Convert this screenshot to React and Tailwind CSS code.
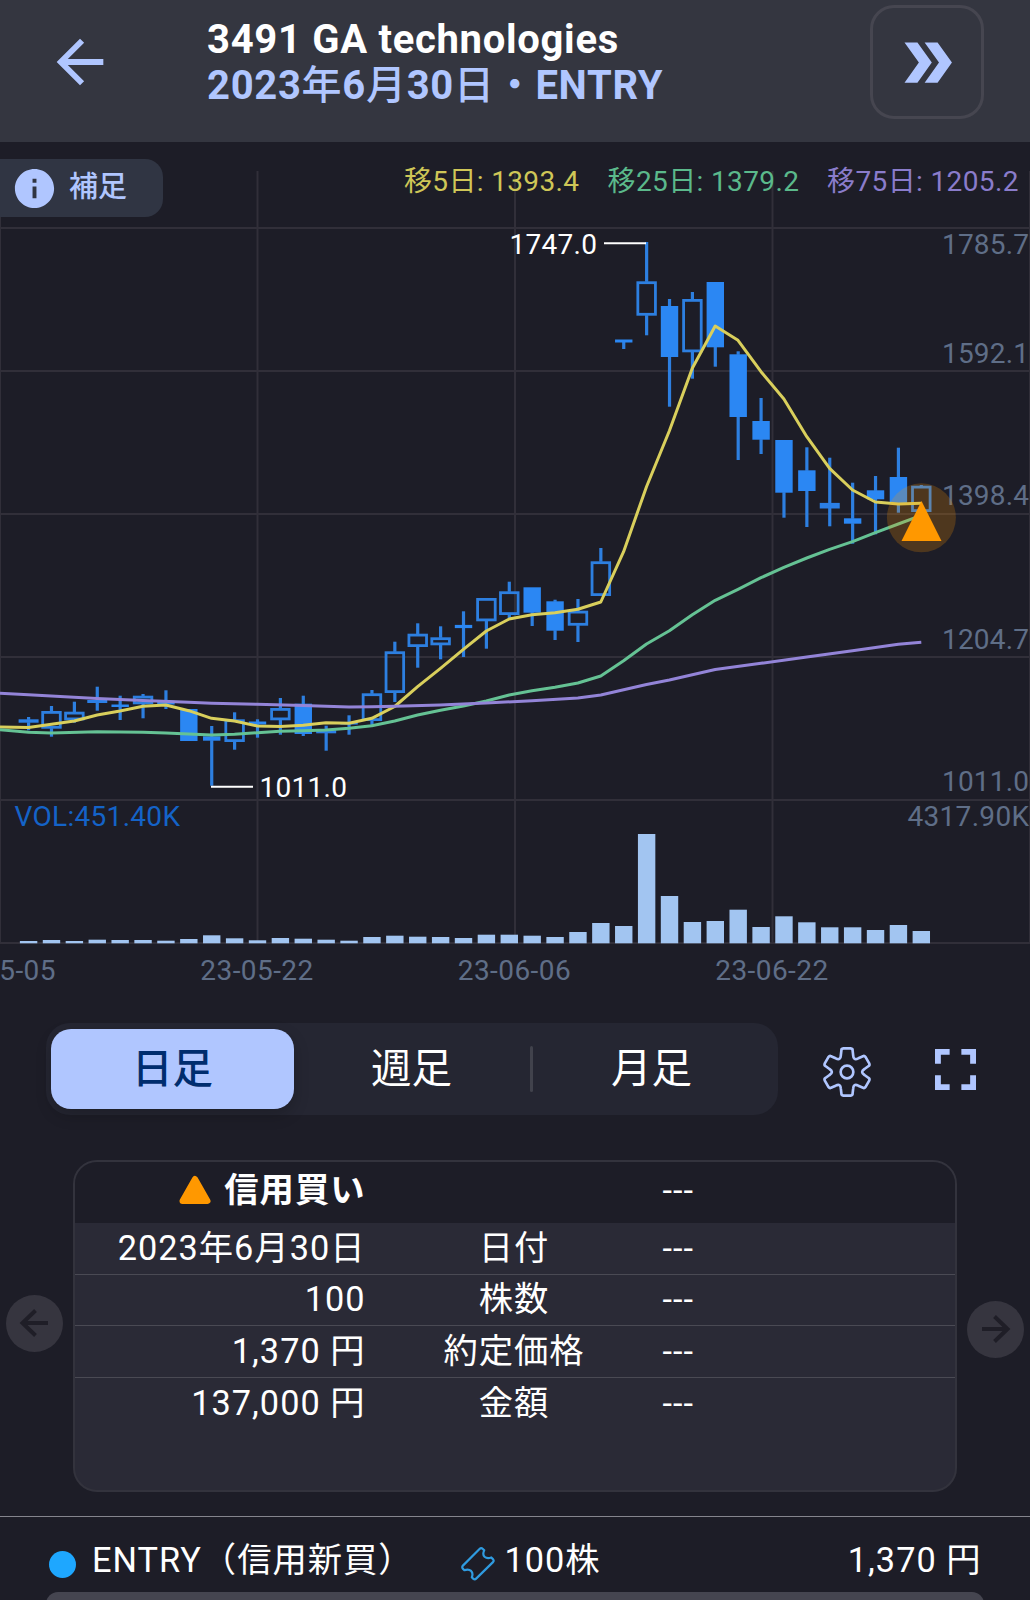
import React from "react";
import { MdArrowBack, MdDoubleArrow, MdInfo } from "react-icons/md";

const X0 = 28.6;
const STEP = 22.89;
const BASE = 943.3;

// type (f: filled, h: hollow), high, body top, body bottom, low
const candles = [
  ["h", 717, 719.3, 722.7, 730.3],
  ["h", 706, 711, 728.7, 736.7],
  ["h", 701.7, 711.7, 720.3, 722.7],
  ["h", 686.7, 700, 703, 710.7],
  ["f", 695.7, 704.5, 707, 720],
  ["h", 694, 695.7, 704.3, 718.3],
  ["f", 690.3, 700.7, 704.5, 709],
  ["f", 709, 709, 741, 741],
  ["f", 726, 736.3, 740.7, 785.7],
  ["h", 712.3, 719.3, 742, 749.7],
  ["f", 719.3, 721.5, 724.5, 737.7],
  ["h", 698, 708, 720.3, 734.7],
  ["f", 695.7, 703.7, 734, 736],
  ["h", 725.7, 730.3, 733.3, 750.7],
  ["f", 715.3, 722.5, 724.5, 734.7],
  ["h", 690, 693.3, 721, 725],
  ["h", 641.7, 651.3, 693, 702],
  ["h", 623.3, 633.7, 647, 667.7],
  ["h", 626.3, 637.3, 645.3, 659.3],
  ["f", 611.3, 624.9, 628.1, 657],
  ["h", 598, 598, 621.3, 648.7],
  ["h", 581.7, 591.3, 615, 618],
  ["f", 587.3, 587.3, 612.7, 626],
  ["f", 599.7, 601.3, 630.7, 640],
  ["h", 599, 610.7, 625.7, 642],
  ["h", 548, 561.3, 596, 596],
  ["f", 339.5, 339.5, 342.5, 349],
  ["h", 242, 281.3, 315.7, 335.3],
  ["f", 299, 306, 357, 406.7],
  ["h", 292, 299, 352.3, 378.7],
  ["f", 282, 282, 347.3, 366.7],
  ["f", 351.3, 354.3, 417, 460],
  ["f", 398, 421, 439.7, 454],
  ["f", 440, 440, 492.7, 517.7],
  ["f", 447.3, 470.3, 491, 527],
  ["h", 457.7, 502.9, 508.5, 526.3],
  ["f", 482.7, 518.3, 523.7, 543.7],
  ["f", 476, 490.3, 499.3, 534.3],
  ["f", 447.7, 477, 503, 512.7],
  ["h", 485, 485.7, 512, 512],
];

const volumeTops = [
  941, 940, 941, 939.7, 940, 940, 940.7, 939, 935.3, 938.3, 940.3, 938, 938.7,
  939.7, 940.7, 937, 935.7, 936.7, 937, 938, 934.7, 934.7, 935.7, 937, 932, 923,
  926, 834, 896, 922, 921, 909.7, 927, 916.3, 922.3, 927.3, 927.3, 930, 925, 931,
];

const ma5 =
  "0,727 28.5,727.5 51.4,724.3 74.3,721 97.2,715 120,711 143,706.3 165.8,705 188.7,710.7 211.6,718.3 234.5,721 257.4,726 280.3,726.5 303.2,725.3 326,722.7 349,723.3 371.8,718.3 394.7,706.5 417.6,686.7 440.5,668.3 463.4,649.3 486.3,631 509.2,619 532,614.7 555,612.7 577.9,609.3 600.8,602 623.6,551.7 646.5,486.7 669.4,430.7 692.3,368.3 715.2,326 738,340.3 761,371.7 783.9,399 806.8,436.7 829.6,468.3 852.5,490 875.4,502 898.3,504 921.3,503.3";
const ma25 =
  "0,729.7 28.5,732.3 51.4,733 97,731.7 143,732.3 166,733 188.7,734 211.6,735 234.5,734.3 257.4,732.7 280,731.3 303,730.7 326,730 349,728.3 371.8,725.7 394.7,721 417.6,715 440.5,710.3 463.4,706 486.3,701 509.2,695 532,690.7 555,687.3 577.9,683 600.8,676 623.6,660.7 646.5,644 669.4,630.7 692.3,614.7 715.2,600.3 738,589.3 761,577.7 783.9,567.3 806.8,558 829.6,549.3 852.5,541.7 875.4,532.7 898.3,524 921.3,515.3";
const ma75 =
  "0,693.2 28.5,694.8 74,697.2 97,698.6 143,700.6 188.7,702.3 211.6,703.2 257,704.2 303,705.5 349,706.9 371.8,706.8 394.7,706.3 440,705 486,703 532,700.7 577.9,698 600.8,695 646.5,684.5 669.4,680 715.2,669.5 761,663.3 806.8,657 852.5,650.7 898.3,644.2 921.3,642.3";

const priceLabels = [
  ["1785.7", 253.7, 86],
  ["1592.1", 362.7, 86],
  ["1398.4", 505.3, 86],
  ["1204.7", 648.7, 86],
  ["1011.0", 791.3, 86],
  ["4317.90K", 825.7, 120.5],
];

function Candle({ i, c }) {
  const [type, high, top, bottom, low] = c;
  const x = X0 + STEP * i;
  return (
    <g>
      {top - high > 0.5 && (
        <line x1={x} x2={x} y1={high} y2={top + 0.5} stroke="#2d7fe0" strokeWidth="3.2" />
      )}
      {low - bottom > 0.5 && (
        <line x1={x} x2={x} y1={bottom - 0.5} y2={low} stroke="#2d7fe0" strokeWidth="3.2" />
      )}
      {type === "f" ? (
        <rect x={x - 8.7} y={top} width="17.4" height={bottom - top} fill="#2b87f3" />
      ) : bottom - top < 6 ? (
        <rect x={x - 10} y={top} width="20" height={bottom - top} fill="#2b7fe6" />
      ) : (
        <rect
          x={x - 8.8}
          y={top + 1.4}
          width="17.6"
          height={bottom - top - 2.8}
          fill="none"
          stroke="#2d7fe0"
          strokeWidth="2.8"
        />
      )}
    </g>
  );
}

function Chart() {
  return (
    <svg
      className="block h-[881px] w-[1030px] shrink-0 font-[Roboto,'Noto_Sans_CJK_JP',sans-serif] text-[28px]"
      viewBox="0 142 1030 881"
    >
      <g stroke="#312f39" strokeWidth="2">
        {[228, 371, 514, 657, 800, 943].map((y) => (
          <line key={y} x1="0" x2="1030" y1={y} y2={y} />
        ))}
        {[0, 257.5, 515, 772.5, 1030].map((x) => (
          <line key={x} x1={x} x2={x} y1="171" y2="943" />
        ))}
      </g>
      {candles.map((c, i) => (
        <Candle key={i} i={i} c={c} />
      ))}
      {volumeTops.map((y, i) => (
        <rect key={i} x={X0 + STEP * i - 8.7} y={y} width="17.4" height={BASE - y} fill="#a2c5f1" />
      ))}
      <g fill="none" strokeWidth="3" strokeLinejoin="round">
        <polyline points={ma5} stroke="#d9cf5c" />
        <polyline points={ma25} stroke="#65c294" />
        <polyline points={ma75} stroke="#9384d8" />
      </g>
      <g stroke="#fff" strokeWidth="2">
        <line x1="604" x2="646" y1="243.2" y2="243.2" />
        <line x1="211" x2="253" y1="786.7" y2="786.7" />
      </g>
      <g fill="#fff">
        <text x="509.5" y="253.7" textLength="87.5">1747.0</text>
        <text x="259.5" y="797" textLength="87.5">1011.0</text>
      </g>
      <text x="404" y="190.8" textLength="175" fill="#cfc657">移5日: 1393.4</text>
      <text x="607.5" y="190.8" textLength="191.5" fill="#5bb98b">移25日: 1379.2</text>
      <text x="827" y="190.8" textLength="191.5" fill="#8a7ccb">移75日: 1205.2</text>
      <g fill="#5f6e87">
        {priceLabels.map(([t, y, w]) => (
          <text key={t} x={1028 - w} y={y} textLength={w + 1}>{t}</text>
        ))}
        {[
          ["23-05-05", -1],
          ["23-05-22", 256.8],
          ["23-06-06", 514.2],
          ["23-06-22", 771.7],
        ].map(([t, x]) => (
          <text key={t} x={x - 56.5} y="980.3" textLength="113">{t}</text>
        ))}
      </g>
      <text x="14.5" y="825.5" textLength="165.5" fill="#1463c8">VOL:451.40K</text>
      <circle cx="921.4" cy="517.8" r="34.5" fill="#ff9800" fillOpacity="0.22" />
      <path d="M921.5 501 L941.5 541 H901.5 Z" fill="#ff9800" />
    </svg>
  );
}

function gearPath() {
  const rot = (x, y, k) => {
    const a = (k * Math.PI) / 3;
    return `${(x * Math.cos(a) - y * Math.sin(a)).toFixed(1)} ${(x * Math.sin(a) + y * Math.cos(a)).toFixed(1)}`;
  };
  let d = "";
  for (let k = 0; k < 6; k++) {
    d += `${k ? "L" : "M"}${rot(66.6, -26, k)} Q${rot(69, -20, k)} ${rot(64.8, -18, k)}`;
    d += ` L${rot(52.5, -9, k)} C${rot(43, -3, k)} ${rot(43, 3, k)} ${rot(52.5, 9, k)}`;
    d += ` L${rot(64.8, 18, k)} Q${rot(69, 20, k)} ${rot(66.6, 26, k)}`;
  }
  return d + "Z";
}

function Gear() {
  return (
    <svg className="h-[50px] w-[50px]" viewBox="-75 -75 150 150" fill="none" stroke="#b0c6ff" strokeWidth="8" strokeLinejoin="round">
      <path d={gearPath()} />
      <circle r="19" />
    </svg>
  );
}

function Ticket() {
  return (
    <svg className="h-[34px] w-[34px]" viewBox="0 0 101 101" fill="none" stroke="#2f9be0" strokeWidth="6.5" strokeLinejoin="round">
      <path d="M5 56 L55 6 Q60 1 65 6 L69 10 Q63 22 70 29 Q78 36 90 31 L95 36 Q99 41 95 45 L45 94 Q41 98 36 94 L32 90 Q37 78 30 71 Q22 64 10 69 L6 65 Q2 61 5 56Z" />
    </svg>
  );
}

function CircleArrow({ flip }) {
  return (
    <div className="flex h-[57px] w-[57px] items-center justify-center rounded-full bg-[#36353f]">
      <svg
        className={flip ? "h-[30px] w-[30px] rotate-180" : "h-[30px] w-[30px]"}
        viewBox="0 0 30 30"
        fill="none"
        stroke="#1f1e27"
        strokeWidth="4"
      >
        <path d="M29 15H4M16.5 2.5L3.5 15L16.5 27.5" />
      </svg>
    </div>
  );
}

const rows = [
  ["2023年6月30日", "日付"],
  ["100", "株数"],
  ["1,370 円", "約定価格"],
  ["137,000 円", "金額"],
];

export default function App() {
  return (
    <div className="flex h-[1600px] w-[1030px] flex-col overflow-hidden bg-[#1d1d27] font-[Roboto,'Noto_Sans_CJK_JP',sans-serif] text-white">
      <header className="flex h-[142px] shrink-0 items-start bg-[#343640]">
        <MdArrowBack className="mt-[27px] ml-[45px] h-[70px] w-[70px] text-[#b0c6ff]" />
        <div className="mt-[17px] ml-[92px] grow text-[40px] leading-[46px] font-bold whitespace-nowrap">
          <div className="tracking-[0.7px]">3491 GA technologies</div>
          <div className="tracking-[0.7px] text-[#b0c6ff]">
            2023<span className="font-medium">年</span>6<span className="font-medium">月</span>30
            <span className="font-medium">日・</span>ENTRY
          </div>
        </div>
        <div className="mt-[5px] mr-[46px] flex h-[114px] w-[114px] items-center justify-center rounded-3xl border-[3px] border-[#464650]">
          <MdDoubleArrow className="h-[69px] w-[69px] text-[#b0c6ff]" />
        </div>
      </header>

      <section className="relative shrink-0">
        <Chart />
        <div className="absolute top-[17px] left-0 flex h-[58px] w-[163px] items-center rounded-r-[18px] bg-[#303543]">
          <MdInfo className="ml-[11px] h-[47px] w-[47px] text-[#b0c6ff]" />
          <span className="-mt-0.5 ml-[11px] text-[29px] leading-none font-medium text-[#b0c6ff]">補足</span>
        </div>
      </section>

      <nav className="flex h-[92px] shrink-0 items-center pl-[46px] text-[40.5px] leading-none">
        <div className="flex h-[92px] w-[732px] items-center rounded-[24px] bg-[#252632]">
          <div className="ml-[5px] flex h-20 w-[243px] items-center justify-center rounded-[20px] bg-[#b0c6ff] font-medium text-[#002d6e] shadow-[0_6px_16px_rgba(0,0,0,0.2)]">
            日足
          </div>
          <div className="flex w-[235px] justify-center">週足</div>
          <div className="ml-px h-[46px] w-[3px] rounded bg-[#41424c]" />
          <div className="flex w-[237px] justify-center">月足</div>
        </div>
        <div className="mt-1.5 ml-11">
          <Gear />
        </div>
        <svg className="ml-[63px] h-[41px] w-[41px]" viewBox="0 0 14 14" fill="#b0c6ff">
          <path d="M2 9H0v5h5v-2H2V9zM0 5h2V2h3V0H0v5zm12 7H9v2h5V9h-2v3zM9 0v2h3v3h2V0H9z" />
        </svg>
      </nav>

      <section className="mt-[45px] flex h-[332px] shrink-0 items-center text-[34.3px] leading-none">
        <div className="-mt-1.5 ml-[5.5px]">
          <CircleArrow />
        </div>
        <div className="mr-2.5 ml-[10.5px] h-[332px] w-[884px] overflow-hidden rounded-3xl border-2 border-[#33333d] bg-[#2a2a36] tracking-[1px]">
          <div className="flex h-[61px] items-center bg-[#1d1d27]">
            <div className="flex w-[290.5px] items-center justify-end pb-1 font-bold">
              <svg className="mr-[13px] h-[30px] w-[32px]" viewBox="0 0 32 30">
                <path d="M16 4L28.5 26H3.5Z" fill="#ff9800" stroke="#ff9800" strokeWidth="6" strokeLinejoin="round" />
              </svg>
              信用買い
            </div>
            <div className="ml-[297px] pb-1">---</div>
          </div>
          {rows.map(([value, label], i) => (
            <div
              key={label}
              className={
                i < 3
                  ? "flex h-[51.5px] items-center border-b-[1.3px] border-[#4a4a54]"
                  : "flex h-[51.5px] items-center"
              }
            >
              <div className="w-[290.5px] pb-px text-right">{value}</div>
              <div className="w-[297px] pb-px text-center">{label}</div>
              <div className="pb-px">---</div>
            </div>
          ))}
        </div>
        <div className="mt-[6px]">
          <CircleArrow flip />
        </div>
      </section>

      <div className="mt-6 h-px shrink-0 bg-[#85858d]" />
      <footer className="flex h-[75px] shrink-0 items-center pt-3 pr-[48.5px] pl-[49px] text-[34.3px] leading-none tracking-[1px] whitespace-nowrap">
        <div className="mt-2 h-[27px] w-[27px] rounded-full bg-[#1ea7ff]" />
        <div className="ml-4 w-[369px]">ENTRY（信用新買）</div>
        <div className="mt-1.5">
          <Ticket />
        </div>
        <div className="ml-[9.5px] grow">100株</div>
        <div>1,370 円</div>
      </footer>
      <div className="mx-[46px] h-10 shrink-0 rounded-t-xl bg-[#454550]" />
    </div>
  );
}
